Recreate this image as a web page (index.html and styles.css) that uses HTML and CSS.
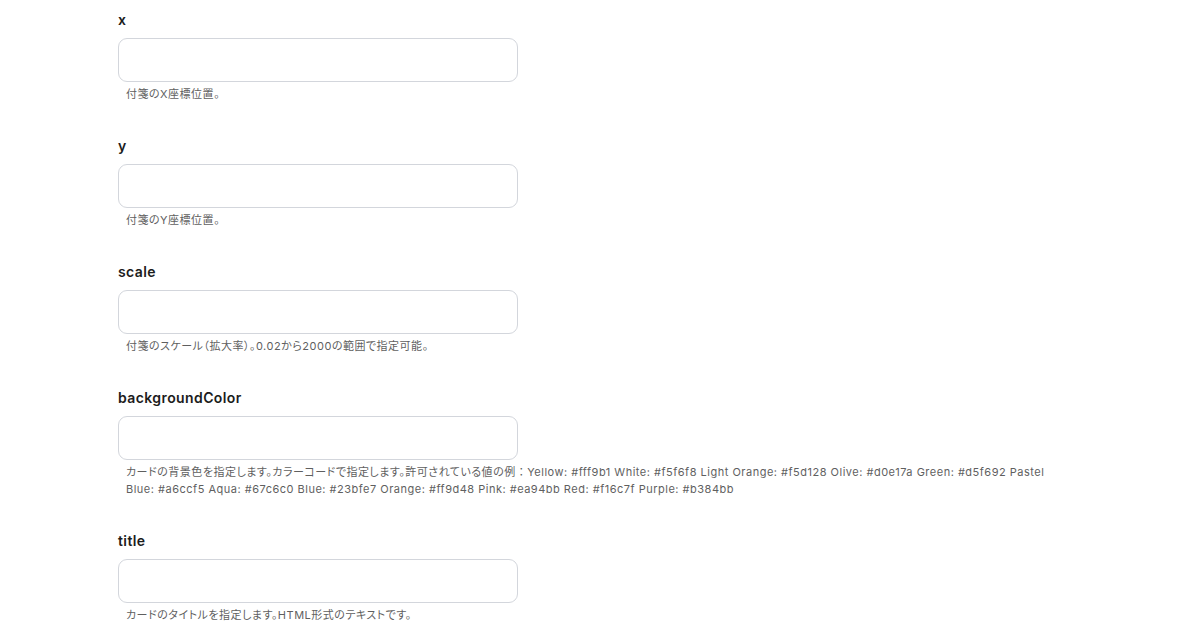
FILE: index.html
```html
<!DOCTYPE html>
<html lang="ja">
<head>
<meta charset="utf-8">
<link rel="stylesheet" href="styles.css">
</head>
<body>
<form class="form">
  <div class="field">
    <label class="label">x</label>
    <input class="input" type="text">
    <p class="help">付箋のX座標位置。</p>
  </div>
  <div class="field">
    <label class="label">y</label>
    <input class="input" type="text">
    <p class="help">付箋のY座標位置。</p>
  </div>
  <div class="field">
    <label class="label">scale</label>
    <input class="input" type="text">
    <p class="help">付箋のスケール（拡大率）。0.02から2000の範囲で指定可能。</p>
  </div>
  <div class="field">
    <label class="label">backgroundColor</label>
    <input class="input" type="text">
    <p class="help">カードの背景色を指定します。カラーコードで指定します。許可されている値の例<span class="full">：</span>Yellow: #fff9b1 White: #f5f6f8 Light Orange: #f5d128 Olive: #d0e17a Green: #d5f692 Pastel Blue: #a6ccf5 Aqua: #67c6c0 Blue: #23bfe7 Orange: #ff9d48 Pink: #ea94bb Red: #f16c7f Purple: #b384bb</p>
  </div>
  <div class="field">
    <label class="label">title</label>
    <input class="input" type="text">
    <p class="help">カードのタイトルを指定します。HTML形式のテキストです。</p>
  </div>
</form>
</body>
</html>
```
FILE: styles.css
```css
html, body {
  margin: 0;
  padding: 0;
  background: #ffffff;
}
body {
  font-family: Inter, "Noto Sans CJK JP", sans-serif;
  color: #1a1a1a;
}
.form {
  display: flex;
  flex-direction: column;
  gap: 33px;
  padding: 10px 0 0 118px;
  width: 950px;
}
.field {
  display: flex;
  flex-direction: column;
}
.label {
  font-size: 14px;
  line-height: 20px;
  font-weight: 600;
  letter-spacing: 0.4px;
  color: #1c1c1c;
  margin-bottom: 8px;
}
.input {
  box-sizing: border-box;
  width: 400px;
  height: 44px;
  border: 1px solid #d3d6dc;
  border-radius: 9px;
  background: #fff;
  margin: 0;
  padding: 0 12px;
}
.help {
  margin: 4px 0 0;
  padding-left: 8px;
  font-size: 11px;
  line-height: 17px;
  color: #5f5f5f;
  letter-spacing: 0.5px;
  font-feature-settings: "palt";
}
.full {
  font-feature-settings: normal;
}
```
